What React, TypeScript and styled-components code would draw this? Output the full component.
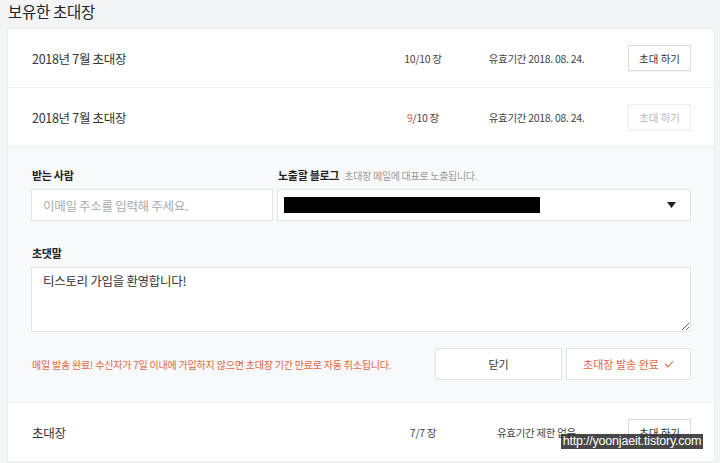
import { FunctionComponent } from 'react';
import styled, { createGlobalStyle } from 'styled-components';

const invites = [
    { name: '2018년 7월 초대장', left: 10, total: 10, expiry: '유효기간 2018. 08. 24.', disabled: false },
    { name: '2018년 7월 초대장', left: 9, total: 10, expiry: '유효기간 2018. 08. 24.', disabled: true, open: true },
    { name: '초대장', left: 7, total: 7, expiry: '유효기간 제한 없음', disabled: false },
];

const App: FunctionComponent = () => (
    <Page>
        <GlobalStyle />
        <Title>보유한 초대장</Title>
        <Card>
            {invites.map((invite, i) => (
                <div key={i}>
                    <Row>
                        <Name>{invite.name}</Name>
                        <Count>
                            <Used $partial={invite.left < invite.total}>{invite.left}</Used>/{invite.total} 장
                        </Count>
                        <Expiry>{invite.expiry}</Expiry>
                        <InviteButton $disabled={invite.disabled}>초대 하기</InviteButton>
                    </Row>
                    {invite.open && <InvitePanel />}
                </div>
            ))}
        </Card>
        <Watermark>http://yoonjaeit.tistory.com</Watermark>
    </Page>
);

const InvitePanel: FunctionComponent = () => (
    <Panel>
        <FieldGrid>
            <Field>
                <Label>받는 사람</Label>
                <TextInput placeholder="이메일 주소를 입력해 주세요." />
            </Field>
            <Field>
                <Label>
                    노출할 블로그 <Hint>초대장 메일에 대표로 노출됩니다.</Hint>
                </Label>
                <Select>
                    <Redacted />
                    <svg width="9" height="6" viewBox="0 0 9 6">
                        <path d="M0 0h9L4.5 6z" fill="#222" />
                    </svg>
                </Select>
            </Field>
        </FieldGrid>
        <Field>
            <Label $top={24}>초댓말</Label>
            <Message defaultValue="티스토리 가입을 환영합니다!" />
        </Field>
        <Footer>
            <Notice>메일 발송 완료! 수신자가 7일 이내에 가입하지 않으면 초대장 기간 만료로 자동 취소됩니다.</Notice>
            <ActionButton>닫기</ActionButton>
            <ActionButton $accent>
                초대장 발송 완료
                <svg width="10" height="8" viewBox="0 0 10 8">
                    <path d="M1 4l3 3 5-6" fill="none" stroke="#e2643f" strokeWidth="1.1" />
                </svg>
            </ActionButton>
        </Footer>
    </Panel>
);

export default App;

const GlobalStyle = createGlobalStyle`
    body {
        margin: 0;
        background: #f3f4f6;
        font-family: 'Noto Sans CJK KR', 'Noto Sans', sans-serif;
        color: #333;
    }
`;

const Page = styled.div`
    position: relative;
    width: 720px;
    height: 463px;
    overflow: hidden;
    padding: 0 6px 0 8px;
    box-sizing: border-box;
`;

const Title = styled.h2`
    margin: 0;
    height: 29px;
    font-size: 15.5px;
    font-weight: 400;
    line-height: 22px;
    color: #222;
    letter-spacing: -0.3px;
`;

const Card = styled.div`
    width: 706px;
    background: #fff;
    box-shadow: 0 0 0 1px #ebedf0;
`;

const Row = styled.div`
    display: grid;
    grid-template-columns: 1fr 90px 137px 86px;
    align-items: center;
    height: 58px;
    padding: 0 23px 0 24px;
    border-bottom: 1px solid #f0f1f3;
    font-size: 12.5px;
    letter-spacing: -0.3px;
`;

const Name = styled.span`
    color: #333;
`;

const Count = styled.span`
    text-align: center;
    font-size: 10.5px;
    color: #444;
`;

const Used = styled.span<{ $partial: boolean }>`
    color: ${({ $partial }) => ($partial ? '#e2643f' : 'inherit')};
`;

const Expiry = styled.span`
    text-align: center;
    font-size: 10.5px;
    color: #444;
`;

const InviteButton = styled.button<{ $disabled: boolean }>`
    justify-self: end;
    width: 63px;
    height: 26px;
    padding: 0;
    background: #fff;
    border: 1px solid ${({ $disabled }) => ($disabled ? '#eceef0' : '#d8dadd')};
    font-family: inherit;
    font-size: 10.5px;
    color: ${({ $disabled }) => ($disabled ? '#b5b7ba' : '#333')};
    box-shadow: 0 1px 1px rgba(0, 0, 0, 0.04);
`;

const Panel = styled.div`
    background: #f8f9fb;
    padding: 20px 23px 22px;
    border-bottom: 1px solid #eef0f2;
`;

const FieldGrid = styled.div`
    display: grid;
    grid-template-columns: 242px 1fr;
    gap: 4px;
`;

const Field = styled.div`
    display: flex;
    flex-direction: column;
`;

const Label = styled.div<{ $top?: number }>`
    margin: ${({ $top }) => $top ?? 0}px 0 6px 1px;
    height: 16px;
    line-height: 16px;
    font-size: 11px;
    font-weight: 700;
    color: #222;
    letter-spacing: -0.3px;
`;

const Hint = styled.span`
    margin-left: 3px;
    font-size: 10px;
    font-weight: 400;
    color: #999;
`;

const TextInput = styled.input`
    box-sizing: border-box;
    height: 32px;
    padding: 0 11px;
    border: 1px solid #e1e3e6;
    background: #fff;
    font-family: inherit;
    font-size: 12.5px;
    outline: none;
    letter-spacing: -0.3px;

    &::placeholder {
        color: #aaa;
    }
`;

const Select = styled.div`
    box-sizing: border-box;
    height: 32px;
    display: flex;
    align-items: center;
    justify-content: space-between;
    padding: 0 14px 0 6px;
    border: 1px solid #e1e3e6;
    background: #fff;
`;

const Redacted = styled.div`
    width: 256px;
    height: 16px;
    background: #000;
`;

const Message = styled.textarea`
    box-sizing: border-box;
    height: 65px;
    padding: 3px 11px;
    border: 1px solid #e1e3e6;
    background: #fff;
    font-family: inherit;
    font-size: 12.5px;
    color: #333;
    outline: none;
    letter-spacing: -0.3px;
`;

const Footer = styled.div`
    display: grid;
    grid-template-columns: 1fr 127px 125px;
    gap: 4px;
    align-items: center;
    margin-top: 16px;
`;

const Notice = styled.span`
    padding-left: 1px;
    font-size: 10px;
    color: #e2643f;
    letter-spacing: -0.2px;
`;

const ActionButton = styled.button<{ $accent?: boolean }>`
    display: flex;
    align-items: center;
    justify-content: center;
    gap: 5px;
    height: 32px;
    padding: 0;
    background: #fff;
    border: 1px solid #e1e3e6;
    font-family: inherit;
    font-size: 11px;
    color: ${({ $accent }) => ($accent ? '#e2643f' : '#333')};
`;

const Watermark = styled.div`
    position: absolute;
    left: 561px;
    top: 434px;
    width: 142px;
    height: 15px;
    background: rgba(40, 40, 40, 0.85);
    color: #fff;
    font-family: 'Liberation Sans', Arial, sans-serif;
    font-size: 12.5px;
    line-height: 15px;
    text-align: center;
    letter-spacing: -0.2px;
`;
